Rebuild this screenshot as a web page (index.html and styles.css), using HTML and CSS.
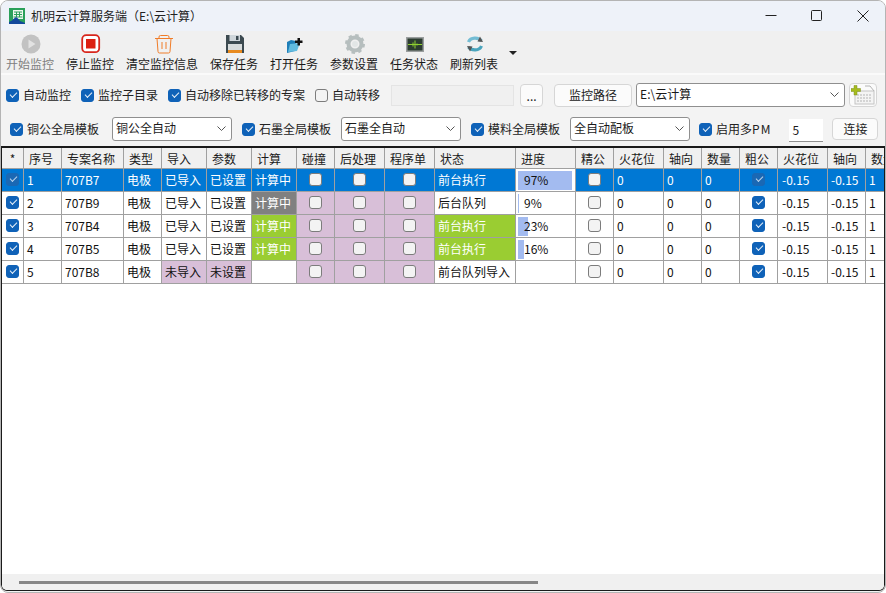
FILE: index.html
```html
<!DOCTYPE html>
<html lang="zh-CN">
<head>
    <meta charset="UTF-8">
    <title>机明云计算服务端（E:\云计算）</title>
    <link rel="stylesheet" href="styles.css">
</head>
<body>
<div class="window">
    <div class="titlebar">
        <svg class="logo" width="16" height="16" viewBox="0 0 16 16">
            <rect width="16" height="15" fill="#2aa05a"/>
            <rect x="4" y="2" width="10" height="9" fill="#eef7ee"/>
            <path d="M5 4h8M5 6.500h8M7.500 4v5M10.500 4v5M4.500 9h9" stroke="#2aa05a" stroke-width="1" fill="none"/>
            <path d="M0 16v-2l3-1.500 2-2 2-1.500 2 1.500 2 2.500 5 2v1z" fill="#12489c"/>
        </svg>
        <span class="title-text">机明云计算服务端（E:\云计算）</span>
        <div class="win-buttons">
            <svg width="12" height="12" viewBox="0 0 12 12"><path d="M0.500 5.500h11" stroke="#222" fill="none"/></svg>
            <svg width="12" height="12" viewBox="0 0 12 12"><rect x="0.500" y="0.500" width="10" height="10" rx="1" stroke="#222" fill="none"/></svg>
            <svg width="12" height="12" viewBox="0 0 12 12"><path d="M0.500 0.500l11 11M11.500 0.500l-11 11" stroke="#222" fill="none"/></svg>
        </div>
    </div>

    <div class="toolbar">
        <div class="tool disabled">
            <svg width="20" height="20" viewBox="0 0 20 20"><circle cx="10" cy="10" r="9.500" fill="#c2c2c2"/><path d="M7.500 5.500l7 4.500-7 4.500z" fill="#e2e2e2"/></svg>
            <span>开始监控</span>
        </div>
        <div class="tool">
            <svg width="20" height="20" viewBox="0 0 20 20"><rect x="1.200" y="1.200" width="17" height="17" rx="4" fill="#fff" stroke="#d8261c" stroke-width="1.800"/><rect x="5" y="5" width="9.500" height="9.500" fill="#dc1f10"/></svg>
            <span>停止监控</span>
        </div>
        <div class="tool trash">
            <svg width="20" height="20" viewBox="0 0 20 20" fill="none" stroke="#f07c28"><path d="M1 4.500h18M5 4.500V3q0-1.500 1.500-1.500h7Q15 1.500 15 3v1.500M3 4.500l1 13q0 1.500 1.500 1.500h9q1.500 0 1.500-1.500l1-13M8 8v7M12 8v7"/></svg>
            <span>清空监控信息</span>
        </div>
        <div class="tool">
            <svg width="20" height="20" viewBox="0 0 20 20"><path d="M1 1h15l3 3v15H1z" fill="#3c4a50"/><rect x="4.500" y="1" width="10.500" height="6" fill="#cfd6da"/><rect x="11" y="2" width="2.500" height="4" fill="#3c4a50"/><rect x="3" y="10" width="14" height="6" fill="#d8dcdc"/><rect x="3" y="16" width="14" height="3" fill="#e88a1e"/></svg>
            <span>保存任务</span>
        </div>
        <div class="tool">
            <svg width="20" height="20" viewBox="0 0 20 20"><path d="M2 8l4-2 5 1-1 10-8 2z" fill="#1f7fb8"/><path d="M3 18l2-8 10-1-3 8z" fill="#62bce0"/><path d="M10 6.500h2.500V4h2.500v2.500h2.500V9h-2.500v2.500h-2.500V9H10z" fill="#111"/></svg>
            <span>打开任务</span>
        </div>
        <div class="tool">
            <svg width="20" height="20" viewBox="0 0 20 20"><circle cx="10" cy="10" r="6.500" fill="none" stroke="#b6bebe" stroke-width="4"/><circle cx="10" cy="10" r="8.500" fill="none" stroke="#b6bebe" stroke-width="3" stroke-dasharray="3.300 3.370"/><circle cx="10" cy="10" r="3" fill="#e2e6e6"/></svg>
            <span>参数设置</span>
        </div>
        <div class="tool">
            <svg width="20" height="20" viewBox="0 0 20 20"><rect x="1" y="3" width="18" height="15" fill="#9a9e9e"/><rect x="2.500" y="4.500" width="15" height="12" fill="#2c3c30"/><path d="M3 10.500h14M10 6.500v8M8 8.500v4M12 9.500v2" fill="none" stroke="#8fd030"/></svg>
            <span>任务状态</span>
        </div>
        <div class="tool">
            <svg width="20" height="20" viewBox="0 0 20 20" fill="none" stroke-width="3.200"><path d="M3.500 8c2-5 10-5 13-1" stroke="#74bdd4"/><path d="M16.500 12c-2 5-10 5-13 1" stroke="#4aa4bc"/><path d="M15 2.500l3 5.500-5.500-.5z" fill="#555" stroke="none"/><path d="M5 17.500l-3-5.500 5.500.5z" fill="#555" stroke="none"/></svg>
            <span>刷新列表</span>
        </div>
        <span class="more"></span>
    </div>

    <div class="options">
        <div class="opt-row row-one">
            <label class="check"><input type="checkbox" class="cb" checked>自动监控</label>
            <label class="check"><input type="checkbox" class="cb" checked>监控子目录</label>
            <label class="check"><input type="checkbox" class="cb" checked>自动移除已转移的专案</label>
            <label class="check"><input type="checkbox" class="cb">自动转移</label>
            <div class="blank-input"></div>
            <button class="btn dots">...</button>
            <button class="btn path-btn">监控路径</button>
            <div class="combo path-combo">E:\云计算<svg width="9" height="5" viewBox="0 0 9 5"><path d="M0.500 0.500l4 4 4-4" fill="none" stroke="#555"/></svg></div>
            <button class="btn add-btn">
                <svg width="24" height="20" viewBox="0 0 24 20"><rect x="4" y="6" width="19" height="13" fill="#f4f4f4" stroke="#c4c4c4"/><path d="M6 10h15M6 13h15M6 16h15" stroke="#b4b4b4" stroke-dasharray="2 1"/><path d="M14 1h5l4 5" fill="none" stroke="#b4b4b4"/><path d="M3 0.500h3v3h3.500v3H6v3.500H3V6.500H0v-3h3z" fill="#a6bc1e" stroke="#7c8c20" stroke-width="0.500"/></svg>
            </button>
        </div>
        <div class="opt-row row-two">
            <label class="check"><input type="checkbox" class="cb" checked>铜公全局模板</label>
            <div class="combo">铜公全自动<svg width="9" height="5" viewBox="0 0 9 5"><path d="M0.500 0.500l4 4 4-4" fill="none" stroke="#555"/></svg></div>
            <label class="check"><input type="checkbox" class="cb" checked>石墨全局模板</label>
            <div class="combo">石墨全自动<svg width="9" height="5" viewBox="0 0 9 5"><path d="M0.500 0.500l4 4 4-4" fill="none" stroke="#555"/></svg></div>
            <label class="check"><input type="checkbox" class="cb" checked>模料全局模板</label>
            <div class="combo">全自动配板<svg width="9" height="5" viewBox="0 0 9 5"><path d="M0.500 0.500l4 4 4-4" fill="none" stroke="#555"/></svg></div>
            <label class="check"><input type="checkbox" class="cb" checked>启用多<span class="pm">PM</span></label>
            <div class="pm-input">5</div>
            <button class="btn connect">连接</button>
        </div>
    </div>

    <div class="grid-frame">
        <div class="grid-body">
            <table class="grid">
                <colgroup>
                    <col class="w22"><col class="w38"><col class="w62"><col class="w38"><col class="w45"><col class="w45"><col class="w45">
                    <col class="w38"><col class="w50"><col class="w50"><col class="w81"><col class="w60"><col class="w38"><col class="w50">
                    <col class="w38"><col class="w38"><col class="w38"><col class="w50"><col class="w38"><col class="w38">
                </colgroup>
                <thead>
                    <tr>
                        <th class="star">*</th><th>序号</th><th>专案名称</th><th>类型</th><th>导入</th><th>参数</th><th>计算</th><th>碰撞</th><th>后处理</th><th>程序单</th><th>状态</th><th>进度</th><th>精公</th><th>火花位</th><th>轴向</th><th>数量</th><th>粗公</th><th>火花位</th><th>轴向</th><th>数量</th>
                    </tr>
                </thead>
                <tbody>
                    <tr class="selected">
                        <td class="c"><input type="checkbox" class="cb" checked></td><td>1</td><td>707B7</td><td>电极</td><td>已导入</td><td>已设置</td><td>计算中</td>
                        <td class="c"><input type="checkbox" class="cb"></td><td class="c"><input type="checkbox" class="cb"></td><td class="c"><input type="checkbox" class="cb"></td>
                        <td>前台执行</td><td class="progress"><div class="bar" style="width: 54px"></div><span>97%</span></td>
                        <td class="c"><input type="checkbox" class="cb"></td><td>0</td><td>0</td><td>0</td><td class="c"><input type="checkbox" class="cb" checked></td><td class="neg">-0.15</td><td>-0.15</td><td>1</td>
                    </tr>
                    <tr>
                        <td class="c"><input type="checkbox" class="cb" checked></td><td>2</td><td>707B9</td><td>电极</td><td>已导入</td><td>已设置</td><td class="grey">计算中</td>
                        <td class="c purple"><input type="checkbox" class="cb"></td><td class="c purple"><input type="checkbox" class="cb"></td><td class="c purple"><input type="checkbox" class="cb"></td>
                        <td>后台队列</td><td class="progress"><div class="bar" style="width: 1px"></div><span>9%</span></td>
                        <td class="c"><input type="checkbox" class="cb"></td><td>0</td><td>0</td><td>0</td><td class="c"><input type="checkbox" class="cb" checked></td><td class="neg">-0.15</td><td>-0.15</td><td>1</td>
                    </tr>
                    <tr>
                        <td class="c"><input type="checkbox" class="cb" checked></td><td>3</td><td>707B4</td><td>电极</td><td>已导入</td><td>已设置</td><td class="green">计算中</td>
                        <td class="c purple"><input type="checkbox" class="cb"></td><td class="c purple"><input type="checkbox" class="cb"></td><td class="c purple"><input type="checkbox" class="cb"></td>
                        <td class="green">前台执行</td><td class="progress"><div class="bar" style="width: 10px"></div><span>23%</span></td>
                        <td class="c"><input type="checkbox" class="cb"></td><td>0</td><td>0</td><td>0</td><td class="c"><input type="checkbox" class="cb" checked></td><td class="neg">-0.15</td><td>-0.15</td><td>1</td>
                    </tr>
                    <tr>
                        <td class="c"><input type="checkbox" class="cb" checked></td><td>4</td><td>707B5</td><td>电极</td><td>已导入</td><td>已设置</td><td class="green">计算中</td>
                        <td class="c purple"><input type="checkbox" class="cb"></td><td class="c purple"><input type="checkbox" class="cb"></td><td class="c purple"><input type="checkbox" class="cb"></td>
                        <td class="green">前台执行</td><td class="progress"><div class="bar" style="width: 6px"></div><span>16%</span></td>
                        <td class="c"><input type="checkbox" class="cb"></td><td>0</td><td>0</td><td>0</td><td class="c"><input type="checkbox" class="cb" checked></td><td class="neg">-0.15</td><td>-0.15</td><td>1</td>
                    </tr>
                    <tr>
                        <td class="c"><input type="checkbox" class="cb" checked></td><td>5</td><td>707B8</td><td>电极</td><td class="purple">未导入</td><td class="purple">未设置</td><td></td>
                        <td class="c purple"><input type="checkbox" class="cb"></td><td class="c purple"><input type="checkbox" class="cb"></td><td class="c purple"><input type="checkbox" class="cb"></td>
                        <td>前台队列导入</td><td class="progress"></td>
                        <td class="c"><input type="checkbox" class="cb"></td><td>0</td><td>0</td><td>0</td><td class="c"><input type="checkbox" class="cb" checked></td><td class="neg">-0.15</td><td>-0.15</td><td>1</td>
                    </tr>
                </tbody>
            </table>
        </div>
        <div class="hscroll"><div class="thumb"></div></div>
    </div>
</div>
</body>
</html>
```

FILE: styles.css
```css
* {
    box-sizing: border-box;
}

html, body {
    margin: 0;
    height: 100%;
    background: white;
}

body {
    font-family: "Noto Sans CJK SC", "Noto Sans", sans-serif;
    font-size: 12px;
    line-height: 16px;
    color: #1a1a1a;
    overflow: hidden;
}

.window {
    width: 886px;
    height: 593px;
    display: flex;
    flex-direction: column;
    background: #f3f3f3;
    border: 1px solid #b4b4b4;
    border-radius: 8px;
    overflow: hidden;
}

/* title bar */
.titlebar {
    height: 30px;
    flex: none;
    display: flex;
    align-items: center;
    padding-left: 8px;
    background: #eef2f9;
}

.logo {
    margin-right: 6px;
}

.title-text {
    color: #222;
}

.win-buttons {
    margin-left: auto;
    display: flex;
    gap: 34px;
    padding-right: 16px;
}

/* toolbar */
.toolbar {
    height: 42px;
    flex: none;
    display: flex;
    align-items: flex-start;
    background: #f0f0f0;
}

.tool {
    display: flex;
    flex-direction: column;
    align-items: center;
    padding: 3px 6px 0;
}

.tool:first-child {
    margin-left: -1px;
}

.tool svg {
    display: block;
    margin: 0 0 2px 2px;
}

.tool.trash svg {
    margin-left: 4px;
}

.tool.disabled span {
    color: #808080;
}

.more {
    margin: 20px 0 0 5px;
    width: 0;
    height: 0;
    border-left: 4px solid transparent;
    border-right: 4px solid transparent;
    border-top: 4px solid #222;
}

/* options */
.options {
    height: 73px;
    flex: none;
    border-top: 2px solid #fafafa;
    padding-top: 8px;
}

.opt-row {
    display: flex;
    align-items: center;
    height: 24px;
}

.row-one {
    padding-left: 5px;
    margin-bottom: 10px;
}

.row-two {
    padding-left: 9px;
}

.check {
    display: flex;
    align-items: center;
    gap: 4px;
    margin-right: 10px;
    color: #222;
}

.pm {
    margin-left: -4px;
    letter-spacing: 1px;
}

.cb {
    appearance: none;
    -webkit-appearance: none;
    display: block;
    flex: none;
    width: 13px;
    height: 13px;
    margin: 0;
    position: relative;
    background: #f3f3f3;
    border: 1px solid #7c7c7c;
    border-radius: 3px;
}

.cb:checked {
    background: #0f62b8;
    border-color: #0f62b8;
}

.cb:checked::after {
    content: "";
    position: absolute;
    left: 2.500px;
    top: 2.500px;
    width: 6px;
    height: 3px;
    border-left: 1px solid #e8f0f8;
    border-bottom: 1px solid #e8f0f8;
    transform: rotate(-45deg);
}

.blank-input {
    width: 123px;
    height: 21px;
    margin: 1px 6px 0 1px;
    background: #f0f0f0;
    border: 1px solid #e4e4e4;
}

.btn {
    font: inherit;
    color: #222;
    padding: 0;
    background: #fbfbfb;
    border: 1px solid #d6d6d6;
    border-radius: 4px;
}

.dots {
    width: 23px;
    height: 23px;
    margin-top: 1px;
    margin-right: 11px;
}

.path-btn {
    width: 78px;
    height: 23px;
    margin-right: 4px;
}

.combo {
    width: 120px;
    height: 24px;
    flex: none;
    display: flex;
    align-items: center;
    justify-content: space-between;
    padding: 0 5px 2px 3px;
    background: #fff;
    border: 1px solid #8f8f8f;
    border-radius: 3px;
    margin-right: 10px;
}

.row-two .check:nth-child(1) {
    margin-right: 13px;
}

.row-two .combo:nth-child(6) {
    margin-right: 9px;
}

.row-two .check:nth-child(7) {
    margin-right: 18px;
}

.path-combo {
    width: 209px;
    margin-right: 4px;
}

.add-btn {
    width: 28px;
    height: 24px;
    display: flex;
    align-items: center;
    justify-content: center;
}

.pm-input {
    width: 34px;
    height: 23px;
    margin-right: 9px;
    margin-top: 2px;
    padding: 3px 0 0 3px;
    background: #fff;
    border-bottom: 1px solid #8f8f8f;
}

.connect {
    width: 46px;
    height: 22px;
}

/* grid */
.grid-frame {
    flex: 1;
    min-height: 0;
    margin: 0 0 1px 0;
    display: flex;
    flex-direction: column;
    background: #fff;
    border: 1px solid #1a1a1a;
    border-top-width: 2px;
    border-radius: 0 0 6px 6px;
    overflow: hidden;
}

.grid-body {
    flex: 1;
    min-height: 0;
    overflow: hidden;
}

.grid {
    table-layout: fixed;
    width: 886px;
    border-collapse: separate;
    border-spacing: 0;
}

.w22 { width: 22px; }
.w38 { width: 38px; }
.w45 { width: 45px; }
.w50 { width: 50px; }
.w60 { width: 60px; }
.w62 { width: 62px; }
.w81 { width: 81px; }

.grid th {
    height: 21px;
    padding: 2px 0 0 5px;
    font-weight: normal;
    text-align: left;
    white-space: nowrap;
    overflow: hidden;
    background: #f0f0f0;
    border-right: 1px solid #a0a0a0;
    border-bottom: 1px solid #a0a0a0;
}

.grid th.star {
    text-align: center;
    padding-left: 0;
}

.grid td {
    height: 23px;
    padding: 0 0 0 3px;
    white-space: nowrap;
    overflow: hidden;
    color: #111;
    background: #fff;
    border-right: 1px solid #a0a0a0;
    border-bottom: 1px solid #a0a0a0;
}

.grid td.c {
    padding: 0;
}

.grid td.c .cb {
    margin: 0 auto;
    position: relative;
    top: -1px;
}

.grid td.neg {
    padding-left: 4px;
}

.grid td.purple { background: #d8bfd8; }
.grid td.green { background: #9acd32; color: #fff; }
.grid td.grey { background: #808080; color: #fff; }

.grid tr.selected td {
    background: #0078d4;
    color: #fff;
}

.grid tr.selected td .cb:checked {
    background: #1a68b4;
    border-color: #1a68b4;
}

.grid tr.selected td .cb:checked::after {
    border-color: #b8d4ee;
}

.grid td.progress,
.grid tr.selected td.progress {
    position: relative;
    padding: 0 0 0 8px;
    background: #fff;
    color: #111;
}

.bar {
    position: absolute;
    left: 2px;
    top: 2px;
    bottom: 1px;
    background: #a3bbf0;
}

.progress span {
    position: relative;
}

.hscroll {
    height: 16px;
    flex: none;
    padding: 7px 0 0 17px;
    background: #f0f0f0;
}

.thumb {
    width: 519px;
    height: 3px;
    background: #868686;
}
```
